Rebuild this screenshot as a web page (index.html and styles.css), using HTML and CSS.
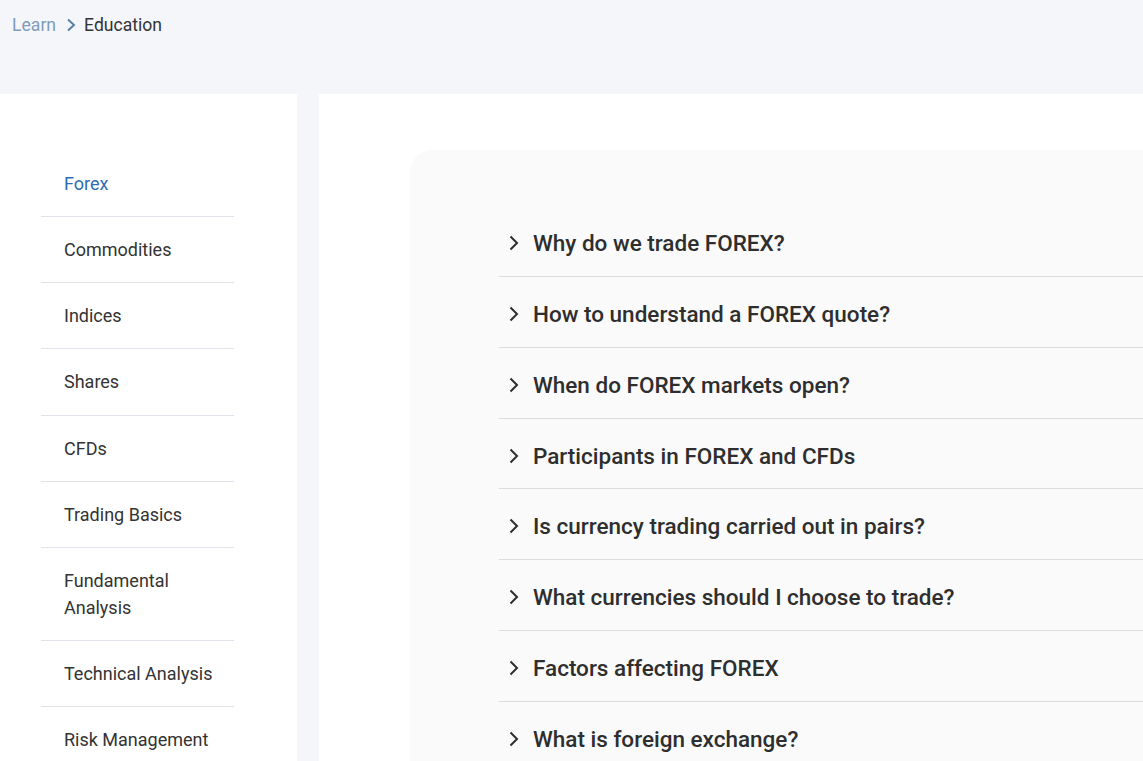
FILE: index.html
```html
<!DOCTYPE html>
<html lang="en">
<head>
    <meta charset="UTF-8">
    <meta name="viewport" content="width=device-width, initial-scale=1.0">
    <title>Education</title>
    <link rel="stylesheet" href="styles.css">
</head>
<body>
    <header class="top">
        <nav class="crumbs">
            <a href="#" class="crumb-link">Learn</a>
            <svg class="crumb-sep" width="10" height="14" viewBox="0 0 10 14"><path d="M2 1.5 L8 7 L2 12.5" fill="none" stroke="currentColor" stroke-width="2"/></svg>
            <span class="crumb-current">Education</span>
        </nav>
    </header>

    <div class="layout">
        <aside class="sidebar">
            <ul class="side-nav">
                <li class="active"><a href="#">Forex</a></li>
                <li><a href="#">Commodities</a></li>
                <li><a href="#">Indices</a></li>
                <li><a href="#">Shares</a></li>
                <li><a href="#">CFDs</a></li>
                <li><a href="#">Trading Basics</a></li>
                <li><a href="#">Fundamental<br>Analysis</a></li>
                <li><a href="#">Technical Analysis</a></li>
                <li><a href="#">Risk Management</a></li>
            </ul>
        </aside>

        <main class="content">
            <section class="panel">
                <div class="faq">
                    <div class="faq-item"><svg class="chev" width="10" height="16" viewBox="0 0 10 16"><path d="M1.5 1.5 L8 8 L1.5 14.5" fill="none" stroke="currentColor" stroke-width="2"/></svg>Why do we trade FOREX?</div>
                    <div class="faq-item"><svg class="chev" width="10" height="16" viewBox="0 0 10 16"><path d="M1.5 1.5 L8 8 L1.5 14.5" fill="none" stroke="currentColor" stroke-width="2"/></svg>How to understand a FOREX quote?</div>
                    <div class="faq-item"><svg class="chev" width="10" height="16" viewBox="0 0 10 16"><path d="M1.5 1.5 L8 8 L1.5 14.5" fill="none" stroke="currentColor" stroke-width="2"/></svg>When do FOREX markets open?</div>
                    <div class="faq-item"><svg class="chev" width="10" height="16" viewBox="0 0 10 16"><path d="M1.5 1.5 L8 8 L1.5 14.5" fill="none" stroke="currentColor" stroke-width="2"/></svg>Participants in FOREX and CFDs</div>
                    <div class="faq-item"><svg class="chev" width="10" height="16" viewBox="0 0 10 16"><path d="M1.5 1.5 L8 8 L1.5 14.5" fill="none" stroke="currentColor" stroke-width="2"/></svg>Is currency trading carried out in pairs?</div>
                    <div class="faq-item"><svg class="chev" width="10" height="16" viewBox="0 0 10 16"><path d="M1.5 1.5 L8 8 L1.5 14.5" fill="none" stroke="currentColor" stroke-width="2"/></svg>What currencies should I choose to trade?</div>
                    <div class="faq-item"><svg class="chev" width="10" height="16" viewBox="0 0 10 16"><path d="M1.5 1.5 L8 8 L1.5 14.5" fill="none" stroke="currentColor" stroke-width="2"/></svg>Factors affecting FOREX</div>
                    <div class="faq-item"><svg class="chev" width="10" height="16" viewBox="0 0 10 16"><path d="M1.5 1.5 L8 8 L1.5 14.5" fill="none" stroke="currentColor" stroke-width="2"/></svg>What is foreign exchange?</div>
                </div>
            </section>
        </main>
    </div>
</body>
</html>
```

FILE: styles.css
```css
* {
    box-sizing: border-box;
}

html, body {
    margin: 0;
    padding: 0;
}

body {
    font-family: 'Roboto', 'Liberation Sans', sans-serif;
    background-color: #f5f6fa;
    color: #333;
    overflow: hidden;
    height: 761px;
}

a {
    text-decoration: none;
    color: inherit;
}

.top {
    height: 94px;
    padding: 14px 12px 0;
}

.crumbs {
    display: flex;
    align-items: center;
    font-size: 17.6px;
    line-height: 22px;
}

.crumb-link {
    color: #7f9cbb;
}

.crumb-sep {
    color: #5a7ea5;
    margin: 0 8px 1px 10px;
}

.crumb-current {
    color: #333;
}

.layout {
    display: flex;
    gap: 22px;
    align-items: stretch;
    height: 667px;
}

.sidebar {
    width: 297px;
    flex-shrink: 0;
    background-color: #fff;
    padding: 57px 0 0 41px;
}

.side-nav {
    list-style: none;
    margin: 0;
    padding: 0;
    width: 193px;
}

.side-nav li {
    border-bottom: 1px solid #e1e3ec;
}

.side-nav li a {
    display: block;
    padding: 19px 0 19.15px 23px;
    font-size: 18px;
    line-height: 27px;
    color: #333;
}

.side-nav li.active a {
    color: #2d6daf;
}

.content {
    flex: 1;
    background-color: #fff;
    padding: 56px 0 0 91px;
}

.panel {
    background-color: #fafafa;
    border-radius: 22px 0 0 0;
    height: 100%;
    padding: 55px 0 0 89px;
}

.faq-item {
    display: flex;
    align-items: center;
    height: 70.83px;
    border-bottom: 1px solid #dcdcdc;
    font-size: 22.5px;
    font-weight: 500;
    color: #2e2e2e;
    padding-left: 10px;
    padding-top: 4px;
}

.faq-item:first-child {
    height: 72px;
}

.chev {
    color: #2e2e2e;
    margin-right: 14px;
    flex-shrink: 0;
}
```
